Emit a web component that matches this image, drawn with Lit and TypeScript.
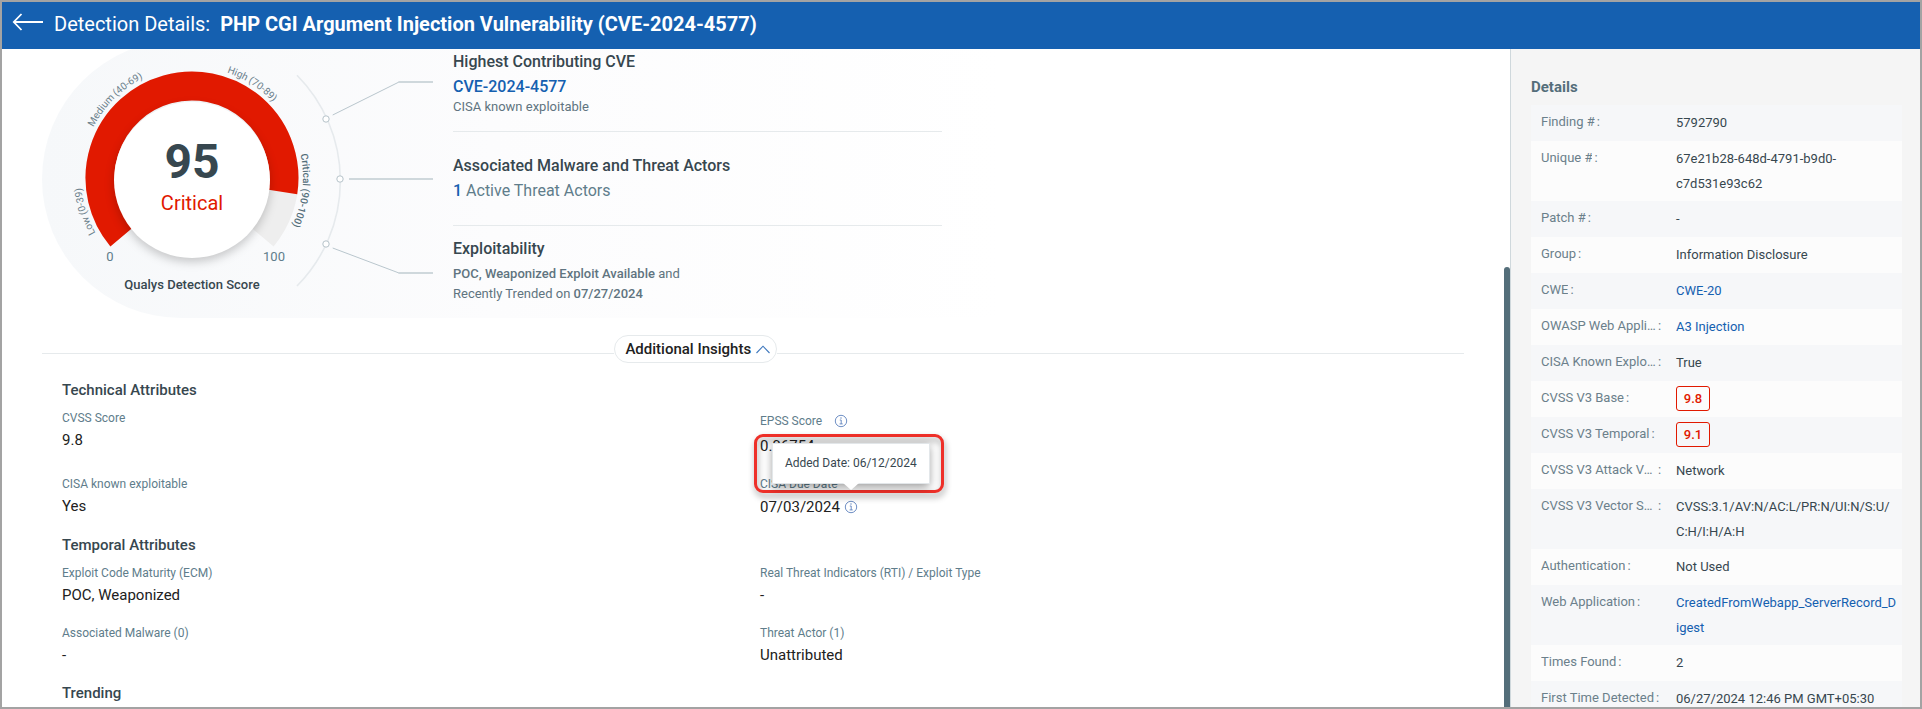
import { LitElement, html, svg, css, nothing } from "lit";
import { customElement, property, state } from "lit/decorators.js";

@customElement("info-button")
class InfoButton extends LitElement {
  @property() label = "";
  static styles = css`
    :host { display: inline-flex; }
    button { display: flex; padding: 0; border: 0; background: none; cursor: pointer; }
    svg { display: block; width: 14px; height: 14px; }
  `;
  render() {
    return html`<button type="button" aria-label=${this.label}>
      <svg viewBox="0 0 14 14" fill="none" stroke="#5f82bd">
        <circle cx="7" cy="7" r="5.7" stroke-width="0.9" />
        <path d="M5.8 6H7.2V9.9M5.6 9.9H8.7" stroke-width="0.9" />
        <circle cx="7" cy="4" r="0.7" fill="#5f82bd" stroke="none" />
      </svg>
    </button>`;
  }
}

@customElement("score-gauge")
class ScoreGauge extends LitElement {
  @property({ type: Number }) score = 0;
  @property() severity = "";
  static styles = css`
    :host { display: block; font-family: Roboto, sans-serif; }
    svg { display: block; width: 100%; height: auto; }
    .band { font-size: 10px; fill: #6b808b; }
    .band.current { font-weight: 500; fill: #546e7a; }
    .score { font-size: 48px; font-weight: 700; fill: #37474f; }
    .severity { font-size: 20px; fill: #e11900; }
    .tick { font-size: 13px; fill: #607d8b; }
    .caption { font-size: 13px; font-weight: 500; fill: #37474f; }
    .face { filter: drop-shadow(0 4px 5px rgba(0, 0, 0, 0.2)); }
  `;
  private bands = [
    { name: "Low (0-39)", at: 20, current: false },
    { name: "Medium (40-69)", at: 130, current: false },
    { name: "High (70-89)", at: 287, current: false },
    { name: "Critical (90-100)", at: 402, current: true },
  ];
  render() {
    return html`<svg viewBox="42 40 391 278" role="img" aria-label="Qualys Detection Score">
      <defs><path id="band-path" d="M107 249.3A111 111 0 1 1 277 249.3" /></defs>
      <g fill="none" stroke-width="29">
        <path d="M121.5 237.1A92 92 0 1 1 262.5 237.1" stroke="#eeeeee" />
        <path d="M121.5 237.1A92 92 0 1 1 282.9 192.1" stroke="#e11900" />
      </g>
      <circle class="face" cx="192" cy="180" r="78" fill="#fff" />
      ${this.bands.map((b) => svg`<text class="band ${b.current ? "current" : ""}"><textPath href="#band-path" startOffset=${b.at}>${b.name}</textPath></text>`)}
      <text class="score" x="192" y="178" text-anchor="middle">${this.score}</text>
      <text class="severity" x="192" y="210" text-anchor="middle">${this.severity}</text>
      <text class="tick" x="110" y="261" text-anchor="middle">0</text>
      <text class="tick" x="274" y="261" text-anchor="middle">100</text>
      <text class="caption" x="192" y="289" text-anchor="middle">Qualys Detection Score</text>
      <g fill="none" stroke="#cfd8dc">
        <path d="M297 75.3A149.7 149.7 0 0 1 297 286" stroke="#e6eaed" stroke-width="1.6" />
        <path d="M332.7 115L399 82M332.7 248L399 273" stroke="#b9c6cd" stroke-width="1" />
        <path d="M398.500 82H433M349 179H433M398.500 273H433" stroke-width="2" />
      </g>
      <g fill="#fff" stroke="#b6c3ca" stroke-width="1">
        <circle cx="326" cy="119" r="3.2" />
        <circle cx="340" cy="179" r="3.2" />
        <circle cx="326" cy="244" r="3.2" />
      </g>
    </svg>`;
  }
}

interface Detail { label: string; value: string; kind?: "link" | "badge"; }

@customElement("details-panel")
class DetailsPanel extends LitElement {
  static styles = css`
    :host { display: block; box-sizing: border-box; padding: 26px 18px 0 20px; background: #f5f5f5; border-left: 1px solid #cfd8dc; overflow: hidden; font: 13px/25px Roboto, sans-serif; }
    h2 { margin: 0; font-size: 15px; line-height: 24px; font-weight: 700; color: #546e7a; }
    dl { margin: 6px 0 0; }
    .row { display: grid; grid-template-columns: 125px minmax(0, 1fr); column-gap: 10px; box-sizing: border-box; min-height: 36px; padding: 5px 5px 5px 10px; background: #fcfcfc; }
    .row:nth-child(odd) { background: #f6f7f9; }
    dt { display: flex; gap: 2px; line-height: 23px; height: 23px; color: #6b808b; }
    .name { max-width: 115px; overflow: hidden; text-overflow: ellipsis; white-space: nowrap; }
    dd { margin: 0; color: #37474f; overflow-wrap: anywhere; }
    a { color: #1560b0; text-decoration: none; }
    .badge { display: block; box-sizing: border-box; width: 34px; line-height: 23px; border: 1px solid #e11900; border-radius: 3px; color: #e11900; font-weight: 500; text-align: center; }
  `;
  private details: Detail[] = [
    { label: "Finding #", value: "5792790" },
    { label: "Unique #", value: "67e21b28-648d-4791-b9d0-c7d531e93c62" },
    { label: "Patch #", value: "-" },
    { label: "Group", value: "Information Disclosure" },
    { label: "CWE", value: "CWE-20", kind: "link" },
    { label: "OWASP Web Application", value: "A3 Injection", kind: "link" },
    { label: "CISA Known Exploitable", value: "True" },
    { label: "CVSS V3 Base", value: "9.8", kind: "badge" },
    { label: "CVSS V3 Temporal", value: "9.1", kind: "badge" },
    { label: "CVSS V3 Attack Vector", value: "Network" },
    { label: "CVSS V3 Vector String", value: "CVSS:3.1/AV:N/AC:L/PR:N/UI:N/S:U/C:H/I:H/A:H" },
    { label: "Authentication", value: "Not Used" },
    { label: "Web Application", value: "CreatedFromWebapp_ServerRecord_Digest", kind: "link" },
    { label: "Times Found", value: "2" },
    { label: "First Time Detected", value: "06/27/2024 12:46 PM GMT+05:30" },
  ];
  private value(d: Detail) {
    if (d.kind === "link") return html`<a href="#">${d.value}</a>`;
    if (d.kind === "badge") return html`<span class="badge">${d.value}</span>`;
    return d.value;
  }
  render() {
    return html`<h2>Details</h2>
      <dl>
        ${this.details.map((d) => html`<div class="row">
          <dt><span class="name">${d.label}</span><span>:</span></dt>
          <dd>${this.value(d)}</dd>
        </div>`)}
      </dl>`;
  }
}

@customElement("app-root")
class AppRoot extends LitElement {
  @state() private open = true;
  static styles = css`
    :host { display: flex; flex-direction: column; box-sizing: border-box; height: 100vh; border: 2px solid #a3a3a3; overflow: hidden; background: #fff; font-family: Roboto, sans-serif; color: #212121; }
    h1, h2, p, dl, dd { margin: 0; }
    a { color: #1560b0; text-decoration: none; }
    button { font-family: inherit; cursor: pointer; }
    header { display: flex; flex: none; align-items: center; gap: 11px; box-sizing: border-box; height: 47px; padding: 0 10px 4px; background: #1560b0; color: #fff; }
    .back { display: flex; padding: 0; border: 0; background: none; }
    .back svg { display: block; width: 31px; height: 18px; margin-bottom: 4px; }
    h1 { font-size: 20px; line-height: 24px; font-weight: 400; white-space: pre; }
    h1 strong { font-weight: 700; }
    main { display: flex; flex: 1; min-height: 0; }
    .pane { position: relative; flex: 1; min-width: 0; overflow: hidden; }
    .scrolled { margin-top: -9px; padding: 0 46px 0 40px; }
    .thumb { position: absolute; top: 218px; right: 0; bottom: 0; width: 6px; border-radius: 3px 3px 0 0; background: #546e7a; }
    details-panel { flex: none; width: 410px; }

    .summary { display: grid; grid-template-columns: 391px 489px; column-gap: 20px; border-radius: 139px 0 0 139px; background: linear-gradient(90deg, #f6f8fa 0, #fcfcfd 450px, #fff 960px); }
    .fact { box-sizing: border-box; padding-top: 9px; height: 91px; line-height: 25px; font-size: 16px; color: #607d8b; }
    .fact + .fact { border-top: 1px solid #e6eaec; height: 94px; padding-top: 21px; }
    .fact:last-child { height: 93px; padding-top: 10px; }
    .fact h2 { font-size: 16px; line-height: 25px; font-weight: 500; color: #37474f; }
    .fact:last-child h2 { margin-bottom: 3px; }
    .fact strong { font-weight: 500; }
    .fact .key { font-weight: 500; }
    .note { font-size: 13px; line-height: 20px; color: #607480; }
    .fact:first-child .note { line-height: 16px; }

    .divider { display: flex; align-items: center; margin-top: 17px; }
    .rule { height: 1px; margin-top: 8px; background: #e6eaec; flex: 5; }
    .rule.after { flex: 6; }
    .toggle { display: flex; align-items: center; gap: 5px; height: 28px; padding: 0 6px 0 10px; border: 1px solid #e6eaec; border-radius: 14px; background: #fff; font-size: 15px; font-weight: 500; color: #212121; }
    .toggle svg { width: 14px; height: 9px; }

    .insights { padding: 17px 6px 0 20px; }
    .insights h2 { margin-bottom: 8px; font-size: 15px; line-height: 20px; font-weight: 500; color: #37474f; }
    .items { display: grid; grid-template-columns: 1fr 1fr; }
    .item { padding-bottom: 16px; }
    .item dt, .item dd { display: flex; align-items: center; }
    .item dt { gap: 12px; min-height: 20px; font-size: 12px; color: #607d8b; }
    .item dd { gap: 4px; min-height: 24px; font-size: 15px; color: #212121; }
    .item dt.tall { min-height: 26px; }
    .item dd.tall { min-height: 25px; }
    .anchor { position: relative; display: flex; }
    .callout { position: absolute; left: -90px; bottom: 21px; box-sizing: border-box; width: 190px; height: 59px; border: 3px solid #ee3029; border-radius: 9px; filter: drop-shadow(1px 4px 3px rgba(0, 0, 0, 0.4)); }
    .tip { position: absolute; left: 50%; bottom: 30px; transform: translateX(-50%); padding: 12px 12px; border: 1px solid #e2e6e9; background: #fff; box-shadow: 0 3px 9px rgba(0, 0, 0, 0.4); font-size: 12px; line-height: 15px; white-space: nowrap; color: #37474f; }
    .tip::after { content: ""; position: absolute; left: 50%; top: 100%; margin-left: -8px; border: 8px solid transparent; border-top: 7px solid #fff; border-bottom: 0; }
  `;

  private item(label: string, value: string, info?: "label" | "value") {
    return html`<dl class="item">
      <dt class=${info === "label" ? "tall" : ""}>${label}${info === "label" ? html`<info-button label="About EPSS Score"></info-button>` : nothing}</dt>
      <dd class=${info === "value" ? "tall" : ""}>${value}${info === "value"
        ? html`<span class="anchor">
            <info-button label="CISA added date"></info-button>
            <span class="callout"></span>
            <span class="tip" role="tooltip">Added Date: 06/12/2024</span>
          </span>`
        : nothing}</dd>
    </dl>`;
  }

  render() {
    return html`
      <header>
        <button class="back" type="button" aria-label="Back">
          <svg viewBox="0 0 31 18" fill="none" stroke="#fff" stroke-width="1.8"><path d="M31 9H2M9.500 1L1.800 9L9.500 17" /></svg>
        </button>
        <h1>Detection Details:  <strong>PHP CGI Argument Injection Vulnerability (CVE-2024-4577)</strong></h1>
      </header>
      <main>
        <div class="pane">
          <div class="scrolled">
            <section class="summary">
              <score-gauge .score=${95} severity="Critical"></score-gauge>
              <div>
                <div class="fact">
                  <h2>Highest Contributing CVE</h2>
                  <p><a class="key" href="#">CVE-2024-4577</a></p>
                  <p class="note">CISA known exploitable</p>
                </div>
                <div class="fact">
                  <h2>Associated Malware and Threat Actors</h2>
                  <p><a class="key" href="#">1</a> Active Threat Actors</p>
                </div>
                <div class="fact">
                  <h2>Exploitability</h2>
                  <p class="note"><strong>POC, Weaponized Exploit Available</strong> and<br />Recently Trended on <strong>07/27/2024</strong></p>
                </div>
              </div>
            </section>
            <div class="divider">
              <span class="rule"></span>
              <button class="toggle" type="button" aria-expanded=${this.open} @click=${() => (this.open = !this.open)}>
                Additional Insights
                <svg viewBox="0 0 14 9" fill="none" stroke="#3f78bd" stroke-width="1.1"><path d="M0.500 8L7 1.200L13.500 8" /></svg>
              </button>
              <span class="rule after"></span>
            </div>
            ${this.open
              ? html`<section class="insights">
                  <h2>Technical Attributes</h2>
                  <div class="items">
                    ${this.item("CVSS Score", "9.8")}
                    ${this.item("EPSS Score", "0.96754", "label")}
                    ${this.item("CISA known exploitable", "Yes")}
                    ${this.item("CISA Due Date", "07/03/2024", "value")}
                  </div>
                  <h2>Temporal Attributes</h2>
                  <div class="items">
                    ${this.item("Exploit Code Maturity (ECM)", "POC, Weaponized")}
                    ${this.item("Real Threat Indicators (RTI) / Exploit Type", "-")}
                    ${this.item("Associated Malware (0)", "-")}
                    ${this.item("Threat Actor (1)", "Unattributed")}
                  </div>
                  <h2>Trending</h2>
                </section>`
              : nothing}
          </div>
          <div class="thumb"></div>
        </div>
        <details-panel></details-panel>
      </main>
    `;
  }
}
